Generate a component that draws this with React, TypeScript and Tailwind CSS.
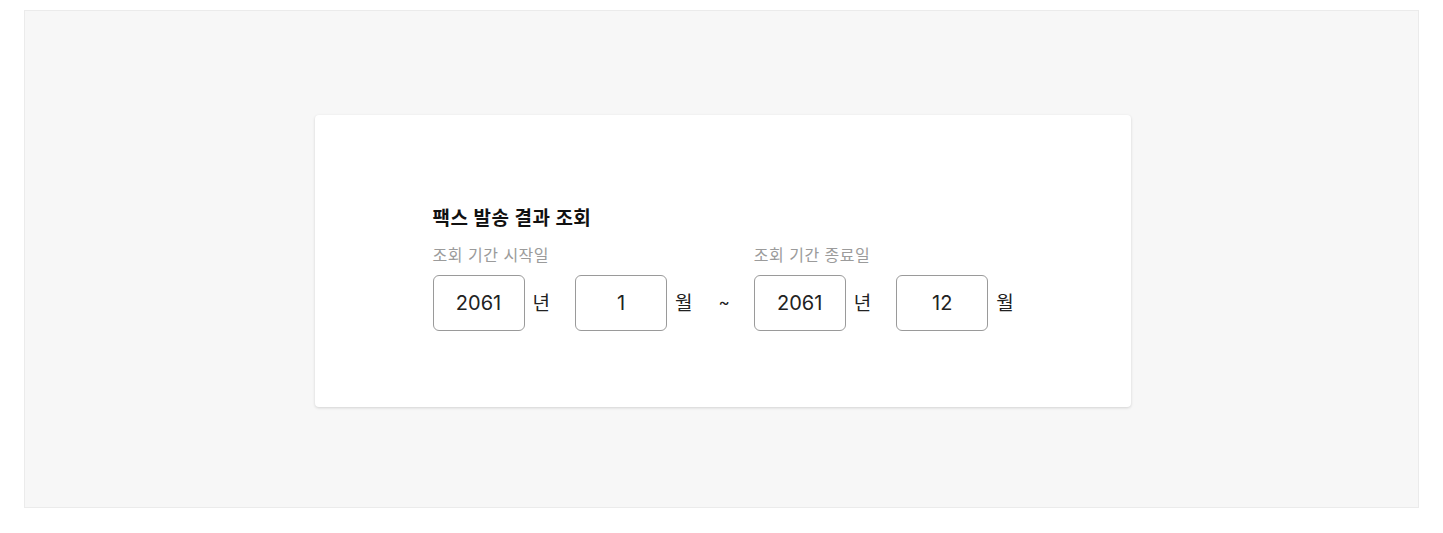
import React from "react";

const font = { fontFamily: "Inter, 'Noto Sans CJK KR', sans-serif" };

function NumBox({ value }: { value: string }) {
  return (
    <div className="w-[92px] h-[56px] rounded-[6px] border border-[#9a9a9a] flex items-center justify-center text-[20px] text-[#222]">
      {value}
    </div>
  );
}

function Unit({ value, label }: { value: string; label: string }) {
  return (
    <div className="flex items-center">
      <NumBox value={value} />
      <span className="ml-[8px] text-[19px] text-[#222] leading-none">{label}</span>
    </div>
  );
}

function Range({ title, year, month }: { title: string; year: string; month: string }) {
  return (
    <div className="flex flex-col">
      <div className="text-[16px] leading-[22px] tracking-[0.5px] text-[#9b9b9b] mb-[9px]">{title}</div>
      <div className="flex items-center gap-[25px]">
        <Unit value={year} label="년" />
        <Unit value={month} label="월" />
      </div>
    </div>
  );
}

export default function App() {
  return (
    <div className="w-full bg-white px-[24px] pt-[10px] pb-[25px]" style={font}>
      <div className="h-[498px] bg-[#f7f7f7] border border-[#ebebeb] flex items-center justify-center">
        <div className="w-[816px] mt-[4px] ml-[2px] bg-white rounded-[4px] shadow-[0_1px_3px_rgba(0,0,0,0.15)] pl-[118px] pt-[91px] pb-[76px]">
          <h1 className="text-[19px] leading-[26px] tracking-[0.5px] font-bold text-[#111] mb-[12px]">팩스 발송 결과 조회</h1>
          <div className="flex items-end">
            <Range title="조회 기간 시작일" year="2061" month="1" />
            <div className="h-[56px] flex items-center ml-[26px] mr-[24px] text-[17px] text-[#222]">~</div>
            <Range title="조회 기간 종료일" year="2061" month="12" />
          </div>
        </div>
      </div>
    </div>
  );
}
